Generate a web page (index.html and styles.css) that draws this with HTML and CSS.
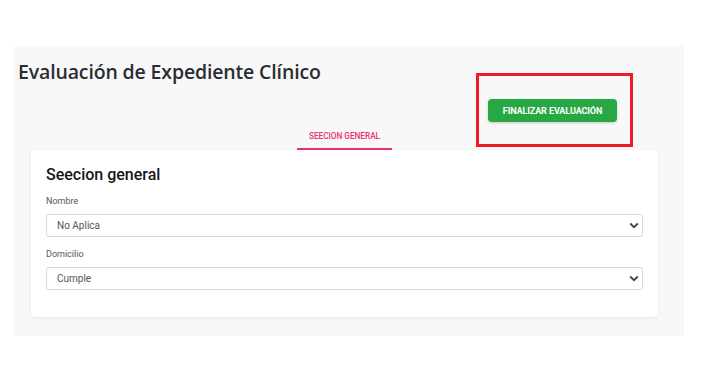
FILE: index.html
```html
<!DOCTYPE html>
<html lang="es">
<head>
    <meta charset="UTF-8">
    <meta name="viewport" content="width=device-width, initial-scale=1.0">
    <title>Evaluación de Expediente Clínico</title>
    <link rel="stylesheet" href="styles.css">
</head>
<body>
    <div class="panel">
        <h1 class="titulo">Evaluación de Expediente Clínico</h1>

        <div class="acciones">
            <button class="btn-finalizar">FINALIZAR EVALUACIÓN</button>
        </div>

        <div class="contenido">
            <div class="tabs">
                <div class="tab activo">SEECION GENERAL</div>
            </div>

            <div class="card">
                <h2>Seecion general</h2>

                <label for="nombre">Nombre</label>
                <div class="campo">
                    <select id="nombre">
                        <option>No Aplica</option>
                        <option>Cumple</option>
                        <option>No Cumple</option>
                    </select>
                    <svg class="flecha" width="10" height="7" viewBox="0 0 10 7"><path d="M1.2 1.5 L5 5.2 L8.8 1.5" fill="none" stroke="#444" stroke-width="1.8"/></svg>
                </div>

                <label for="domicilio">Domicilio</label>
                <div class="campo">
                    <select id="domicilio">
                        <option>Cumple</option>
                        <option>No Aplica</option>
                        <option>No Cumple</option>
                    </select>
                    <svg class="flecha" width="10" height="7" viewBox="0 0 10 7"><path d="M1.2 1.5 L5 5.2 L8.8 1.5" fill="none" stroke="#444" stroke-width="1.8"/></svg>
                </div>
            </div>
        </div>
    </div>
</body>
</html>
```

FILE: styles.css
```css
body {
    margin: 0;
    padding: 0;
    background-color: #fff;
    font-family: Roboto, "Liberation Sans", sans-serif;
}

.panel {
    background-color: #f8f8f8;
    margin: 46px 0 0 14px;
    width: 670px;
    height: 290px;
    box-sizing: border-box;
    padding-top: 12px;
}

.titulo {
    font-family: "Open Sans", sans-serif;
    font-size: 19.5px;
    font-weight: 600;
    color: #2b2c34;
    margin: 0 0 0 4px;
    line-height: 27px;
    letter-spacing: -0.15px;
}

.acciones {
    display: flex;
    justify-content: flex-end;
    padding-right: 67px;
    margin-top: 14px;
}

.btn-finalizar {
    position: relative;
    width: 129px;
    height: 23px;
    background-color: #28a745;
    color: #fff;
    border: none;
    border-radius: 4px;
    font-family: Roboto, sans-serif;
    font-weight: 700;
    font-size: 9px;
    letter-spacing: -0.1px;
    box-shadow: 0 1px 3px rgba(0, 0, 0, 0.2);
    cursor: pointer;
}

/* recuadro rojo de resaltado */
.btn-finalizar::after {
    content: "";
    position: absolute;
    top: -26px;
    left: -12px;
    right: -16px;
    bottom: -25px;
    border: 3px solid #ee1d25;
    pointer-events: none;
}

.contenido {
    margin: 3px 26px 0 17px;
}

.tabs {
    display: flex;
    justify-content: center;
}

.tab {
    width: 95px;
    height: 25px;
    box-sizing: border-box;
    text-align: center;
    font-size: 8.2px;
    font-weight: 500;
    color: #e8336b;
    line-height: 23px;
}

.tab.activo {
    border-bottom: 2px solid #e8336b;
}

.card {
    background-color: #fff;
    border-radius: 4px;
    box-shadow: 0 1px 3px rgba(0, 0, 0, 0.08);
    padding: 15px 15px 27px 15px;
}

.card h2 {
    font-size: 16px;
    font-weight: 500;
    color: #16161a;
    margin: 0 0 12px 0;
    line-height: 19px;
}

.card label {
    display: block;
    font-size: 9px;
    color: #555;
    line-height: 11px;
    margin-bottom: 7px;
}

.campo {
    position: relative;
    margin-bottom: 12px;
}

.campo:last-child {
    margin-bottom: 0;
}

.campo select {
    width: 100%;
    height: 23px;
    -webkit-appearance: none;
    appearance: none;
    background-color: #fff;
    border: 1px solid #d8dae2;
    border-radius: 2px;
    padding: 0 10px;
    font-family: Roboto, sans-serif;
    font-size: 10px;
    color: #555;
    outline: none;
}

.flecha {
    position: absolute;
    right: 4px;
    top: 8px;
}
```
